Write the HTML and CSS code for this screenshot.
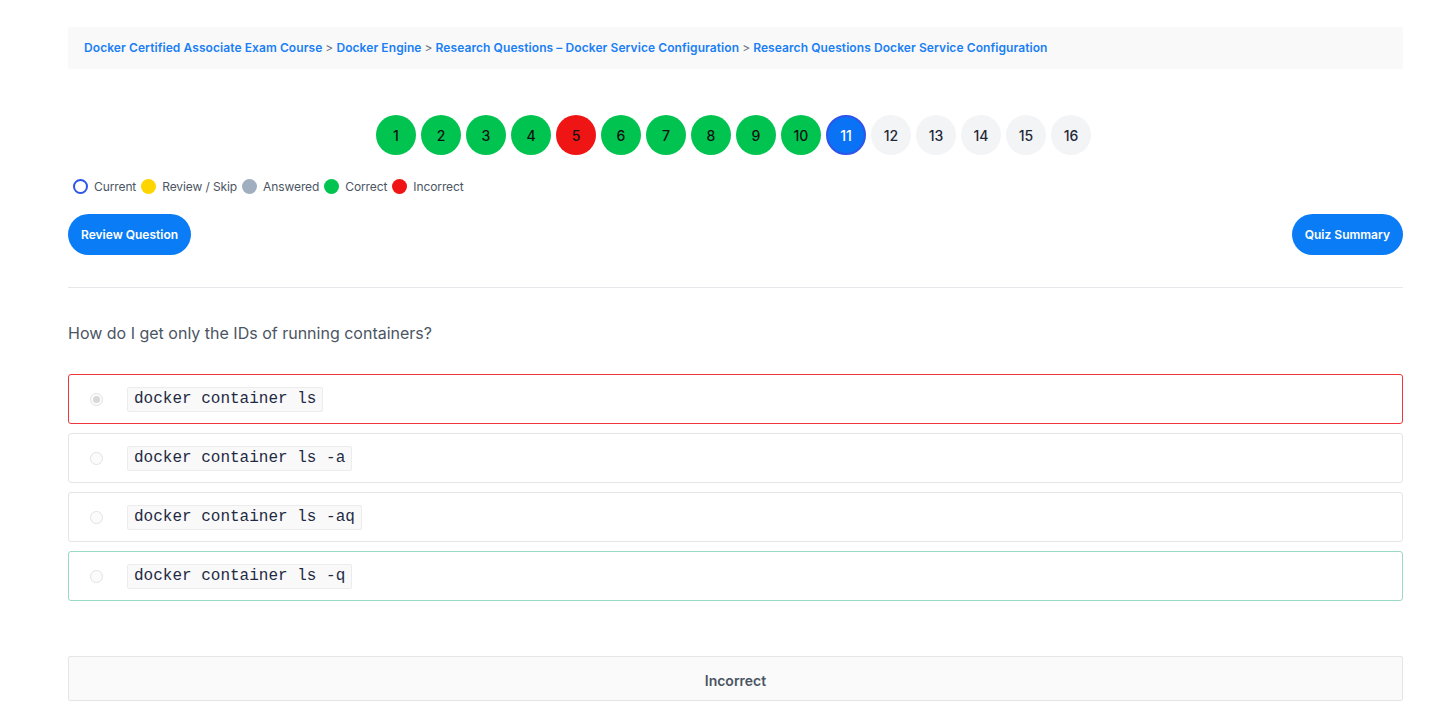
FILE: index.html
```html
<!DOCTYPE html>
<html>
<head>
<meta charset="utf-8">
<link rel="stylesheet" href="styles.css">
</head>
<body>
<div class="page">
  <nav class="crumbs">
    <a href="#">Docker Certified Associate Exam Course</a><span class="sep">&gt;</span><a href="#">Docker Engine</a><span class="sep">&gt;</span><a href="#">Research Questions – Docker Service Configuration</a><span class="sep">&gt;</span><a href="#">Research Questions Docker Service Configuration</a>
  </nav>

  <div class="qnav">
    <span class="q correct">1</span>
    <span class="q correct">2</span>
    <span class="q correct">3</span>
    <span class="q correct">4</span>
    <span class="q incorrect">5</span>
    <span class="q correct">6</span>
    <span class="q correct">7</span>
    <span class="q correct">8</span>
    <span class="q correct">9</span>
    <span class="q correct">10</span>
    <span class="q current">11</span>
    <span class="q">12</span>
    <span class="q">13</span>
    <span class="q">14</span>
    <span class="q">15</span>
    <span class="q">16</span>
  </div>

  <div class="legend">
    <span class="dot dot-current"></span><span class="lbl">Current</span>
    <span class="dot dot-review"></span><span class="lbl">Review / Skip</span>
    <span class="dot dot-answered"></span><span class="lbl">Answered</span>
    <span class="dot dot-correct"></span><span class="lbl">Correct</span>
    <span class="dot dot-incorrect"></span><span class="lbl">Incorrect</span>
  </div>

  <div class="actions">
    <button class="btn">Review Question</button>
    <button class="btn">Quiz Summary</button>
  </div>

  <hr class="divider">

  <p class="question">How do I get only the IDs of running containers?</p>

  <ul class="options">
    <li class="opt opt-wrong"><span class="radio radio-checked"></span><code>docker container ls</code></li>
    <li class="opt"><span class="radio"></span><code>docker container ls -a</code></li>
    <li class="opt"><span class="radio"></span><code>docker container ls -aq</code></li>
    <li class="opt opt-right"><span class="radio"></span><code>docker container ls -q</code></li>
  </ul>

  <div class="result">Incorrect</div>
</div>
</body>
</html>
```

FILE: styles.css
```css
* { box-sizing: border-box; }
html, body { margin: 0; padding: 0; background: #fff; }
body {
  font-family: Inter, "Noto Sans", "Liberation Sans", sans-serif;
  color: #4b5563;
}
.page {
  width: 1335px;
  margin-left: 68px;
  padding-top: 27px;
}
.crumbs {
  background: #f9f9f9;
  height: 42px;
  padding: 0 16px 2px 16px;
  display: flex;
  align-items: center;
  font-size: 12px;
  font-weight: 600;
  letter-spacing: 0.08px;
  border-radius: 2px;
}
.crumbs a { color: #1a7ff5; text-decoration: none; }
.crumbs .sep { color: #6b7280; font-weight: 400; margin: 0 3px; }

.qnav {
  display: flex;
  justify-content: center;
  gap: 5px;
  margin-top: 46px;
  padding-right: 4px;
}
.q {
  width: 40px;
  height: 40px;
  border-radius: 50%;
  background: #f3f4f6;
  color: #1f2937;
  display: flex;
  align-items: center;
  justify-content: center;
  font-size: 14px;
  font-weight: 500;
}
.q.correct { background: #00c44f; color: #111; }
.q.incorrect { background: #f01515; color: #111; }
.q.current { background: #0a72f5; color: #fff; border: 2px solid #2f55e8; }

.legend {
  display: flex;
  align-items: center;
  margin-top: 24px;
  padding-left: 5px;
  font-size: 12px;
  letter-spacing: -0.1px;
  color: #4b5563;
}
.dot {
  width: 15px;
  height: 15px;
  border-radius: 50%;
  margin-right: 6px;
}
.lbl { margin-right: 5px; }
.dot-current { border: 2px solid #2f55e8; }
.dot-review { background: #ffd500; }
.dot-answered { background: #a0aec0; }
.dot-correct { background: #00c44f; }
.dot-incorrect { background: #f01515; }

.actions {
  display: flex;
  justify-content: space-between;
  margin-top: 20px;
}
.btn {
  height: 41px;
  padding: 0 13px;
  border: none;
  border-radius: 21px;
  background: #0a7cf5;
  color: #fff;
  font-family: Inter, "Noto Sans", "Liberation Sans", sans-serif;
  font-size: 12px;
  font-weight: 600;
}

.divider {
  border: none;
  border-top: 1px solid #e5e7eb;
  margin: 32px 0 0 0;
}
.question {
  margin: 35px 0 0 0;
  font-size: 16px;
  color: #4b5563;
}
.options {
  list-style: none;
  margin: 31px 0 0 0;
  padding: 0;
}
.opt {
  height: 50px;
  border: 1px solid #e5e5e5;
  border-radius: 3px;
  margin-bottom: 9px;
  display: flex;
  align-items: center;
  padding-left: 21px;
  padding-top: 1px;
}
.opt-wrong { border-color: #f0353b; }
.opt-right { border-color: #9ad9c3; }
.radio {
  width: 13px;
  height: 13px;
  border-radius: 50%;
  border: 1px solid #e2e2e2;
  background: #fbfbfb;
  margin-right: 24px;
  position: relative;
}
.radio-checked::after {
  content: "";
  position: absolute;
  left: 2px; top: 2px;
  width: 7px; height: 7px;
  border-radius: 50%;
  background: #d8d8d8;
}
code {
  font-family: "Liberation Mono", "DejaVu Sans Mono", monospace;
  font-size: 16px;
  color: #1f2a44;
  background: #f9f9f9;
  border: 1px solid #ececec;
  border-radius: 2px;
  padding: 1px 6px;
  line-height: 21px;
}
.result {
  margin-top: 55px;
  height: 45px;
  padding-top: 4px;
  background: #fafafa;
  border: 1px solid #e5e5e5;
  border-radius: 2px;
  display: flex;
  align-items: center;
  justify-content: center;
  font-size: 14px;
  font-weight: 600;
  color: #4b5563;
}
```
